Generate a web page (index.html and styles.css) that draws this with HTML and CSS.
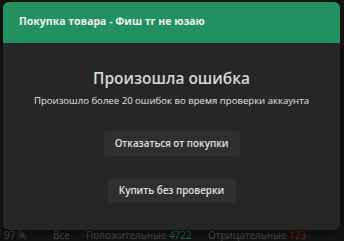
FILE: index.html
```html
<!DOCTYPE html>
<html lang="ru">
  <head>
    <meta charset="UTF-8" />
    <meta name="viewport" content="width=device-width, initial-scale=1.0" />
    <title>Покупка товара</title>
    <link rel="stylesheet" href="styles.css">
  </head>
  <body>
    <div class="modal">
      <div class="modal-header">Покупка товара - Фиш тг не юзаю</div>
      <div class="modal-body">
        <h2>Произошла ошибка</h2>
        <p>Произошло более 20 ошибок во время проверки аккаунта</p>
        <button class="btn btn-cancel">Отказаться от покупки</button>
        <button class="btn btn-skip">Купить без проверки</button>
      </div>
    </div>

    <div class="stats">
      <span class="percent">97 %</span>
      <span class="all">Все</span>
      <span class="pos">Положительные <b class="green">4722</b></span>
      <span class="neg">Отрицательные <b class="red">123</b></span>
    </div>
  </body>
</html>
```

FILE: styles.css
```css
* {
  margin: 0;
  padding: 0;
  box-sizing: border-box;
}

body {
  font-family: "Open Sans", "Liberation Sans", sans-serif;
  background: #131313;
  color: #ddd;
  padding: 2px 4px 0 3px;
  height: 241px;
  overflow: hidden;
}

.modal {
  background: #262626;
  border-radius: 6px;
  height: 228px;
  overflow: hidden;
  box-shadow: 0 2px 6px rgba(0, 0, 0, 0.5);
  position: relative;
  z-index: 1;
}

.modal-header {
  background: #21915f;
  color: #f2f2f2;
  height: 41px;
  padding: 12px 0 0 16px;
  font-size: 10.5px;
  font-weight: bold;
}

.modal-body {
  display: flex;
  flex-direction: column;
  align-items: center;
  padding-top: 24px;
}

.modal-body h2 {
  font-size: 15.5px;
  font-weight: 600;
  color: #d6d6d6;
  line-height: 22px;
}

.modal-body p {
  font-size: 9.6px;
  color: #e0e0e0;
  margin-top: 5px;
}

.btn {
  font-family: inherit;
  border: none;
  border-radius: 4px;
  background: #2f2f2f;
  color: #e2e2e2;
  font-size: 9.8px;
  font-weight: 600;
  height: 26px;
}

.btn-cancel {
  width: 136px;
  margin-top: 23px;
}

.btn-skip {
  width: 128px;
  height: 25px;
  margin-top: 22px;
}

.stats {
  display: flex;
  font-size: 10px;
  color: #4a4a4a;
  margin-top: -1px;
  line-height: 12px;
}

.percent {
  width: 50px;
  padding-left: 1px;
}

.all {
  width: 33px;
}

.pos {
  width: 122px;
}

.green {
  font-weight: normal;
  color: #1f6b47;
}

.red {
  font-weight: normal;
  color: #7a2020;
}
```
